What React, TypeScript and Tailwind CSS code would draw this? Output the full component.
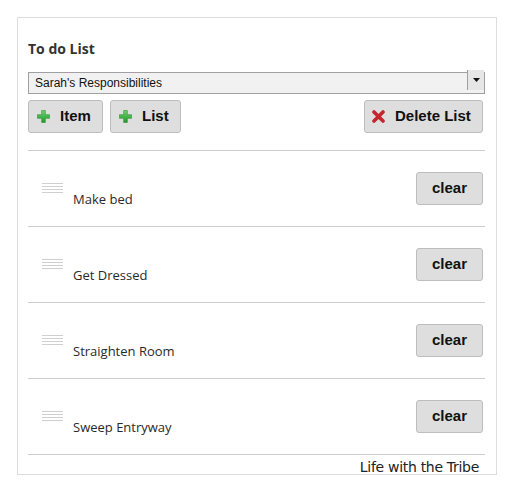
import { useState } from 'react';

type Task = { id: number; label: string };

const initialTasks: Task[] = [
  { id: 1, label: 'Make bed' },
  { id: 2, label: 'Get Dressed' },
  { id: 3, label: 'Straighten Room' },
  { id: 4, label: 'Sweep Entryway' },
];

function PlusIcon() {
  return (
    <svg width="13" height="13" viewBox="0 0 14 14">
      <defs>
        <linearGradient id="pg" x1="0" y1="0" x2="0" y2="1">
          <stop offset="0" stopColor="#6fd26f" />
          <stop offset="1" stopColor="#1f9a2b" />
        </linearGradient>
      </defs>
      <path d="M5 0.5h4v4.5h4.5v4H9v4.5H5V9H0.5V5H5z" fill="url(#pg)" stroke="#2a8a30" strokeWidth="0.6" />
    </svg>
  );
}

function CrossIcon() {
  return (
    <svg width="13" height="13" viewBox="0 0 13 13">
      <path d="M2 2L11 11M11 2L2 11" stroke="#c4262e" strokeWidth="3.6" strokeLinecap="round" />
    </svg>
  );
}

function Handle() {
  return (
    <div className="flex flex-col gap-[2px] w-[21px] mt-[11px]">
      <div className="h-px bg-[#cfcfcf]" />
      <div className="h-px bg-[#cfcfcf]" />
      <div className="h-px bg-[#cfcfcf]" />
      <div className="h-px bg-[#cfcfcf]" />
    </div>
  );
}

const btn =
  'flex items-center gap-[10px] h-[33px] bg-[#dedede] border border-[#bdbdbd] rounded-[3px] text-[15px] font-bold text-[#111] font-["Liberation_Sans",Arial,sans-serif]';

export default function App() {
  const [tasks, setTasks] = useState<Task[]>(initialTasks);

  return (
    <div className="w-[511px] h-[494px] bg-white pt-[17px] pl-[17px]">
      <div className="w-[480px] h-[458px] border border-[#dcdcdc] pl-[10px] pr-[11px] pt-[22px] flex flex-col">
        <h2 className='text-[14px] leading-[18px] font-bold text-[#333] font-["Open_Sans",sans-serif]'>To do List</h2>

        {/* list picker */}
        <div className="relative mt-[11px] h-[22px]">
          <select className='w-full h-full appearance-none bg-[#f1f1f1] border border-[#a0a0a0] pl-[6px] text-[12px] text-[#111] font-["Liberation_Sans",Arial,sans-serif] outline-none'>
            <option>Sarah's Responsibilities</option>
          </select>
          <div className="absolute right-[1px] top-[1px] bottom-[1px] w-[17px] border-l border-[#a0a0a0] bg-[#e6e6e6] flex items-center justify-center pointer-events-none">
            <svg width="7" height="4" viewBox="0 0 7 4">
              <path d="M0 0h7L3.5 4z" fill="#111" />
            </svg>
          </div>
        </div>

        <div className="flex items-center mt-[9px] pr-[2px]">
          <button className={`${btn} w-[75px] pl-[8px]`}>
            <PlusIcon />
            Item
          </button>
          <button className={`${btn} w-[71px] ml-[7px] pl-[8px]`}>
            <PlusIcon />
            List
          </button>
          <button className={`${btn} w-[119px] ml-auto pl-[7px] gap-[9px]`}>
            <CrossIcon />
            Delete List
          </button>
        </div>

        <div className="mt-[17px] border-t border-[#cccccc]">
          {tasks.map((t) => (
            <div key={t.id} className="h-[76px] border-b border-[#cccccc] flex items-start pt-[21px] pl-[14px] pr-[2px]">
              <Handle />
              <span className='ml-[10px] mt-[18px] text-[13px] leading-[18px] text-[#2a2a2a] font-["Open_Sans",sans-serif]'>
                {t.label}
              </span>
              <button
                onClick={() => setTasks(tasks.filter((x) => x.id !== t.id))}
                className={`${btn} w-[67px] ml-auto justify-center`}
              >
                clear
              </button>
            </div>
          ))}
        </div>

        <div className='flex justify-end pr-[6px] mt-[3px] text-[14px] leading-[18px] text-[#222] font-["DejaVu_Sans",sans-serif] tracking-[-0.3px]'>
          Life with the Tribe
        </div>
      </div>
    </div>
  );
}
